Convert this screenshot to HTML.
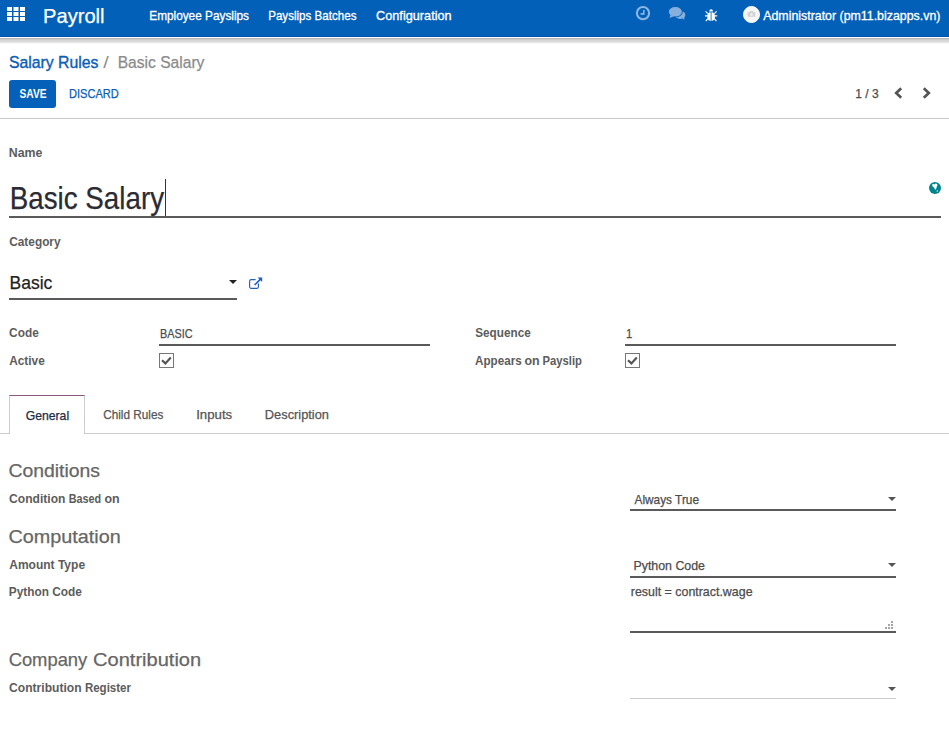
<!DOCTYPE html>
<html><head><meta charset="utf-8"><title>Basic Salary - Odoo</title>
<style>
*{box-sizing:border-box;margin:0;padding:0}
html,body{width:949px;height:751px;overflow:hidden;background:#fff}
body{font-family:"Liberation Sans",sans-serif;font-size:13px;color:#4c4c4c;position:relative}
.abs{position:absolute}
.t{position:absolute;left:0;top:0;white-space:nowrap;line-height:1;transform-origin:0 0;display:block}
#nav{position:absolute;left:0;top:0;width:949px;height:37px;background:#0260b8;border-bottom:1px solid #0050a8}
#navshadow{position:absolute;left:0;top:38px;width:949px;height:6px;background:linear-gradient(#b5b5b5 0,#b5b5b5 1px,#cdcdcd 1px,#cdcdcd 2px,#d6d6d6 2px,#d6d6d6 3px,#dbdbdb 3px,#dbdbdb 4px,#e8e8e8 4px,#e8e8e8 5px,#f8f8f8 5px,#f8f8f8 6px)}
.line{position:absolute;background:#5a5a5a;height:2px}
.caret{position:absolute;width:0;height:0;border-left:4px solid transparent;border-right:4px solid transparent;border-top:4px solid #555}
.cb{position:absolute;width:15px;height:15px;border:1px solid #777;background:#fff}
.dot{position:absolute;width:2px;height:2px;background:#a4a4a4}
</style></head><body>
<div id="nav"></div>
<div id="navshadow"></div>
<!-- apps grid icon -->
<svg class="abs" style="left:7px;top:7px" width="18" height="14" viewBox="0 0 18 14"><g fill="#fff"><rect x="0" y="0" width="5" height="4"/><rect x="6.500" y="0" width="5" height="4"/><rect x="13" y="0" width="5" height="4"/><rect x="0" y="5" width="5" height="4"/><rect x="6.500" y="5" width="5" height="4"/><rect x="13" y="5" width="5" height="4"/><rect x="0" y="10" width="5" height="4"/><rect x="6.500" y="10" width="5" height="4"/><rect x="13" y="10" width="5" height="4"/></g></svg>
<!-- clock -->
<svg class="abs" style="left:635px;top:5px" width="16" height="16" viewBox="0 0 16 16"><circle cx="8" cy="8.100" r="6.100" fill="none" stroke="#8db6e2" stroke-width="2.100"/><path d="M8.800 5v3.900H5.600" fill="none" stroke="#8db6e2" stroke-width="1.600"/></svg>
<!-- chat -->
<svg class="abs" style="left:668px;top:6px" width="19" height="15" viewBox="0 0 19 15"><g fill="#86afdd"><ellipse cx="12.100" cy="9" rx="5.300" ry="3.900"/><path d="M13.500 11.500l2.900 2.400-.3-3.400z"/><ellipse cx="7.350" cy="5.800" rx="7.400" ry="5.600" fill="#0260b8"/><ellipse cx="7.350" cy="5.800" rx="6.550" ry="4.720"/><path d="M2.600 8.800L1.500 11.900l4.400-1.600z"/></g></svg>
<!-- bug -->
<svg class="abs" style="left:705px;top:8px" width="13" height="14" viewBox="0 0 13 14"><g fill="#fff"><path d="M4.200 3.500a1.900 2.300 0 0 1 3.800 0z"/><path d="M5.700 4.300v8.600c-2.200 0-3.500-1.400-3.500-4.300s1.300-4.300 3.500-4.300zM6.500 4.300v8.600c2.200 0 3.500-1.400 3.500-4.300s-1.300-4.300-3.500-4.300z"/></g><g stroke="#fff" stroke-width="1.100" fill="none"><path d="M0 7.900h2.400M9.800 7.900h2.400M.6 3.400l2.300 2.200M11.600 3.400L9.300 5.600M.8 13l2.200-2.300M11.400 13L9.200 10.700"/></g></svg>
<!-- avatar -->
<div class="abs" style="left:743px;top:6px;width:17px;height:17px;border-radius:50%;background:#f6f6f6;border:1px solid #fff"></div>
<svg class="abs" style="left:747px;top:10px" width="9" height="8" viewBox="0 0 9 8"><path d="M.6 2.200h1.800l.8-1.200h2.600l.8 1.200h1.600V6.800H.6z" fill="#d2d2d2"/><circle cx="4.500" cy="4.400" r="1.500" fill="#ededed"/></svg>

<!-- control panel -->
<div class="abs" style="left:9px;top:80px;width:47px;height:28px;background:#0460b8;border-radius:3px"></div>
<svg class="abs" style="left:894px;top:87px" width="9" height="12" viewBox="0 0 9 12"><path d="M7.200 1.200L2.200 6l5 4.800" fill="none" stroke="#555" stroke-width="2.700"/></svg>
<svg class="abs" style="left:922px;top:87px" width="9" height="12" viewBox="0 0 9 12"><path d="M1.800 1.200L6.800 6l-5 4.800" fill="none" stroke="#555" stroke-width="2.700"/></svg>
<div class="abs" style="left:0;top:118px;width:949px;height:1px;background:#c8c8c8"></div>

<!-- name field -->
<div class="abs" style="left:165px;top:179px;width:1px;height:37px;background:#333"></div>
<div class="line" style="left:9px;top:216px;width:932px"></div>
<svg class="abs" style="left:929px;top:182.300px" width="12" height="12" viewBox="0 0 12 12"><circle cx="6" cy="6" r="6" fill="#00858c"/><path d="M3 2.800L4.400 1.700l1 .8 1.200-1 1.500.6.400 1.200-.8 1.400-.2 1.400-.9 1.700-1-.7-.2-1.400-1.200-.6-.8-1.200zM7.500 8.700l1.300-.4.200.8-1 .8z" fill="#fff"/></svg>

<!-- category -->
<div class="line" style="left:9px;top:298px;width:228px"></div>
<div class="caret" style="left:229px;top:280px;border-top-color:#222"></div>
<svg class="abs" style="left:248px;top:276px" width="15" height="14" viewBox="0 0 15 14"><path d="M7.600 3.600H3.200a1.600 1.600 0 0 0-1.600 1.600v5.600a1.600 1.600 0 0 0 1.600 1.600h5.600a1.600 1.600 0 0 0 1.600-1.600V7.600" fill="none" stroke="#1f5fc0" stroke-width="1.150"/><path d="M6.600 9L13 2.600" stroke="#1f5fc0" stroke-width="1.700" fill="none"/><path d="M9.600 1.400h4.600v4.600z" fill="#1f5fc0"/></svg>

<!-- code / sequence -->
<div class="line" style="left:159px;top:344px;width:271px"></div>
<div class="line" style="left:625px;top:344px;width:271px"></div>
<div class="cb" style="left:159px;top:353px"></div>
<svg class="abs" style="left:159px;top:353px" width="15" height="15" viewBox="0 0 15 15"><path d="M3 7.200l3.400 3.200 5.400-5.800" fill="none" stroke="#555" stroke-width="2.200"/></svg>
<div class="cb" style="left:625px;top:353px"></div>
<svg class="abs" style="left:625px;top:353px" width="15" height="15" viewBox="0 0 15 15"><path d="M3 7.200l3.400 3.200 5.400-5.800" fill="none" stroke="#555" stroke-width="2.200"/></svg>

<!-- tabs -->
<div class="abs" style="left:0;top:433px;width:949px;height:1px;background:#ccc"></div>
<div class="abs" style="left:9px;top:395px;width:76px;height:39px;background:#fff;border:1px solid #ccc;border-top-color:#875a7b;border-bottom:none"></div>

<!-- general tab content -->
<div class="line" style="left:630px;top:509px;width:266px"></div>
<div class="caret" style="left:888px;top:497px"></div>
<div class="line" style="left:630px;top:576px;width:266px"></div>
<div class="caret" style="left:888px;top:563px"></div>
<div class="line" style="left:630px;top:631px;width:266px"></div>
<div class="dot" style="left:891px;top:621px"></div>
<div class="dot" style="left:888px;top:624px"></div><div class="dot" style="left:891px;top:624px"></div>
<div class="dot" style="left:885px;top:627px"></div><div class="dot" style="left:888px;top:627px"></div><div class="dot" style="left:891px;top:627px"></div>
<div class="abs" style="left:630px;top:698px;width:266px;height:1px;background:#ccc"></div>
<div class="caret" style="left:888px;top:687px"></div>

<span class="t" style="font-size:19.8px;font-weight:normal;color:#fff;transform:translate(43.05px,7.40px) scaleX(1.0169);-webkit-text-stroke:0.25px #fff;">Payroll</span>
<span class="t" style="font-size:12.4px;font-weight:normal;color:#fff;transform:translate(149.25px,10.00px) scaleX(0.9530);-webkit-text-stroke:0.3px #fff;">Employee Payslips</span>
<span class="t" style="font-size:12.4px;font-weight:normal;color:#fff;transform:translate(268.16px,10.00px) scaleX(0.9355);-webkit-text-stroke:0.3px #fff;">Payslips Batches</span>
<span class="t" style="font-size:12.4px;font-weight:normal;color:#fff;transform:translate(376.06px,10.00px) scaleX(1.0252);-webkit-text-stroke:0.3px #fff;">Configuration</span>
<span class="t" style="font-size:12.4px;font-weight:normal;color:#fff;transform:translate(763.20px,10.00px) scaleX(0.9986);-webkit-text-stroke:0.3px #fff;">Administrator (pm11.bizapps.vn)</span>
<span class="t" style="font-size:17.1px;font-weight:normal;color:#0a5eb8;transform:translate(8.91px,53.50px) scaleX(0.9234);-webkit-text-stroke:0.4px #0a5eb8;">Salary Rules</span>
<span class="t" style="font-size:17.1px;font-weight:normal;color:#8c8c8c;transform:translate(103.20px,53.50px) scaleX(1.1579);">/</span>
<span class="t" style="font-size:17.1px;font-weight:normal;color:#8a8a8a;transform:translate(117.64px,53.50px) scaleX(0.9132);-webkit-text-stroke:0.25px #8a8a8a;">Basic Salary</span>
<span class="t" style="font-size:12.4px;font-weight:bold;color:#fff;transform:translate(19.49px,88.00px) scaleX(0.8281);">SAVE</span>
<span class="t" style="font-size:12.4px;font-weight:normal;color:#0a5eb8;transform:translate(68.90px,88.00px) scaleX(0.8959);-webkit-text-stroke:0.25px #0a5eb8;">DISCARD</span>
<span class="t" style="font-size:12.4px;font-weight:normal;color:#4c4c4c;transform:translate(855.25px,88.00px) scaleX(0.9714);-webkit-text-stroke:0.25px #4c4c4c;">1 / 3</span>
<span class="t" style="font-size:12.4px;font-weight:bold;color:#5c5c5c;transform:translate(8.73px,147.00px) scaleX(0.9969);">Name</span>
<span class="t" style="font-size:30.5px;font-weight:normal;color:#2b2b33;transform:translate(9.72px,182.70px) scaleX(0.9103);-webkit-text-stroke:0.25px #2b2b33;">Basic Salary</span>
<span class="t" style="font-size:12.4px;font-weight:bold;color:#5c5c5c;transform:translate(9.22px,236.00px) scaleX(0.9562);">Category</span>
<span class="t" style="font-size:19px;font-weight:normal;color:#222;transform:translate(9.52px,273.00px) scaleX(0.9213);-webkit-text-stroke:0.25px #222;">Basic</span>
<span class="t" style="font-size:12.4px;font-weight:bold;color:#5c5c5c;transform:translate(9.12px,327.00px) scaleX(0.9560);">Code</span>
<span class="t" style="font-size:12.4px;font-weight:normal;color:#4c4c4c;transform:translate(160.02px,328.00px) scaleX(0.8755);-webkit-text-stroke:0.25px #4c4c4c;">BASIC</span>
<span class="t" style="font-size:12.4px;font-weight:bold;color:#5c5c5c;transform:translate(9.24px,355.00px) scaleX(0.9540);">Active</span>
<span class="t" style="font-size:12.4px;font-weight:bold;color:#5c5c5c;transform:translate(475.24px,327.00px) scaleX(0.9472);">Sequence</span>
<span class="t" style="font-size:12.4px;font-weight:normal;color:#4c4c4c;transform:translate(625.90px,328.00px) scaleX(0.9116);-webkit-text-stroke:0.25px #4c4c4c;">1</span>
<span class="t" style="font-size:12.4px;font-weight:bold;color:#5c5c5c;transform:translate(475.05px,355.00px) scaleX(0.9395);">Appears</span>
<span class="t" style="font-size:12.4px;font-weight:bold;color:#5c5c5c;transform:translate(524.50px,355.00px) scaleX(1.0018);">on</span>
<span class="t" style="font-size:12.4px;font-weight:bold;color:#5c5c5c;transform:translate(542.50px,355.00px) scaleX(0.9095);">Payslip</span>
<span class="t" style="font-size:12.4px;font-weight:normal;color:#222b44;transform:translate(25.68px,410.00px) scaleX(0.9853);-webkit-text-stroke:0.25px #222b44;">General</span>
<span class="t" style="font-size:12.4px;font-weight:normal;color:#555;transform:translate(103.21px,409.00px) scaleX(0.9491);-webkit-text-stroke:0.25px #555;">Child Rules</span>
<span class="t" style="font-size:12.4px;font-weight:normal;color:#555;transform:translate(196.20px,409.00px) scaleX(1.0667);-webkit-text-stroke:0.25px #555;">Inputs</span>
<span class="t" style="font-size:12.4px;font-weight:normal;color:#555;transform:translate(264.87px,409.00px) scaleX(1.0340);-webkit-text-stroke:0.25px #555;">Description</span>
<span class="t" style="font-size:19px;font-weight:normal;color:#666;transform:translate(8.48px,461.00px) scaleX(1.0201);-webkit-text-stroke:0.25px #666;">Conditions</span>
<span class="t" style="font-size:12.4px;font-weight:bold;color:#5c5c5c;transform:translate(9.11px,493.00px) scaleX(0.9731);">Condition</span>
<span class="t" style="font-size:12.4px;font-weight:bold;color:#5c5c5c;transform:translate(68.74px,493.00px) scaleX(0.8732);">Based</span>
<span class="t" style="font-size:12.4px;font-weight:bold;color:#5c5c5c;transform:translate(104.40px,493.00px) scaleX(1.0018);">on</span>
<span class="t" style="font-size:19px;font-weight:normal;color:#666;transform:translate(8.46px,527.00px) scaleX(1.0417);-webkit-text-stroke:0.25px #666;">Computation</span>
<span class="t" style="font-size:12.4px;font-weight:bold;color:#5c5c5c;transform:translate(9.24px,559.00px) scaleX(0.9690);">Amount Type</span>
<span class="t" style="font-size:12.4px;font-weight:bold;color:#5c5c5c;transform:translate(8.76px,586.00px) scaleX(0.9557);">Python Code</span>
<span class="t" style="font-size:19px;font-weight:normal;color:#666;transform:translate(8.63px,650.00px) scaleX(0.9670);-webkit-text-stroke:0.25px #666;">Company</span>
<span class="t" style="font-size:19px;font-weight:normal;color:#666;transform:translate(93.04px,650.00px) scaleX(1.0554);-webkit-text-stroke:0.25px #666;">Contribution</span>
<span class="t" style="font-size:12.4px;font-weight:bold;color:#5c5c5c;transform:translate(9.11px,682.00px) scaleX(0.9750);">Contribution</span>
<span class="t" style="font-size:12.4px;font-weight:bold;color:#5c5c5c;transform:translate(84.89px,682.00px) scaleX(0.9299);">Register</span>
<span class="t" style="font-size:12.4px;font-weight:normal;color:#4c4c4c;transform:translate(634.50px,494.00px) scaleX(0.9561);-webkit-text-stroke:0.25px #4c4c4c;">Always True</span>
<span class="t" style="font-size:12.4px;font-weight:normal;color:#4c4c4c;transform:translate(633.50px,560.00px) scaleX(0.9968);-webkit-text-stroke:0.25px #4c4c4c;">Python Code</span>
<span class="t" style="font-size:12.4px;font-weight:normal;color:#4c4c4c;transform:translate(630.82px,586.00px) scaleX(1.0012);-webkit-text-stroke:0.25px #4c4c4c;">result = contract.wage</span>
</body></html>
